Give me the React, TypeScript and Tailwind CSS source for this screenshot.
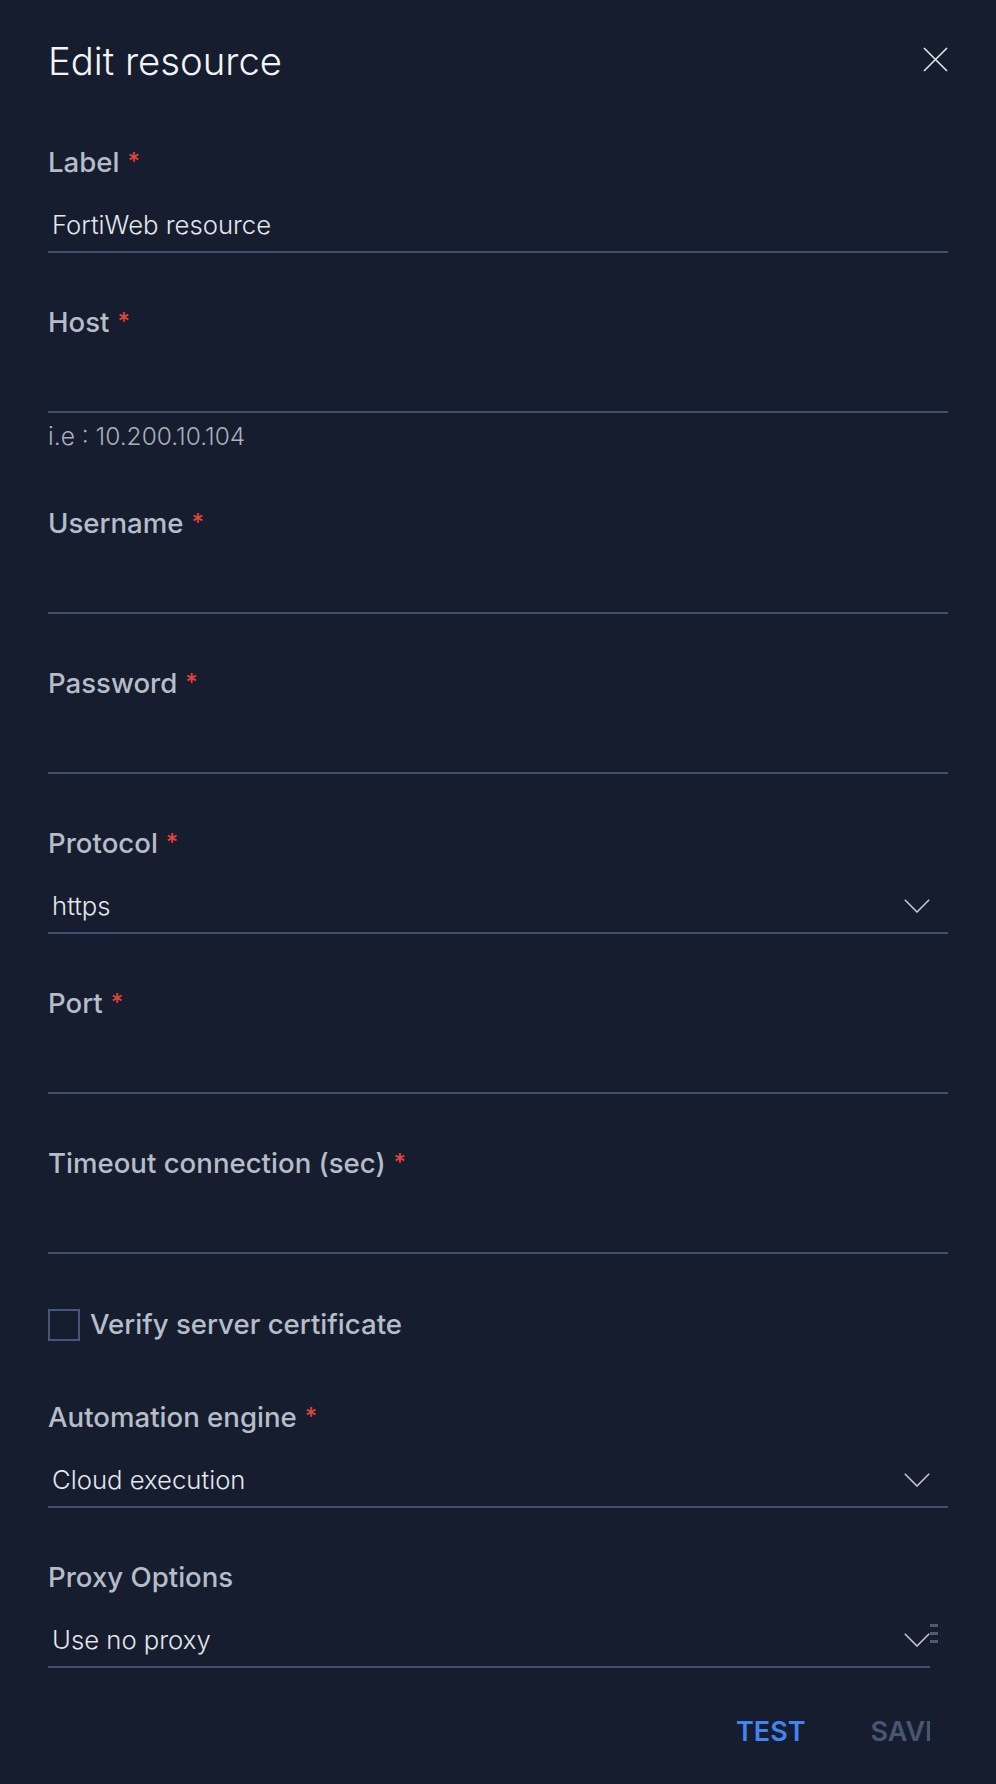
import React from "react";

function Chevron() {
  return (
    <svg width="26" height="14" viewBox="0 0 26 14" fill="none" className="shrink-0">
      <polyline points="0.8,0.8 13,13 25.2,0.8" stroke="#c9cdd3" strokeWidth="1.5" />
    </svg>
  );
}

function Field({
  label,
  required = true,
  value,
  select = false,
  className = "",
  chevronClass = "pr-[18px]",
  children,
}: {
  label: string;
  required?: boolean;
  value?: string;
  select?: boolean;
  className?: string;
  chevronClass?: string;
  children?: React.ReactNode;
}) {
  return (
    <div className={className}>
      <div className="h-[40px] flex items-center text-[27.6px] font-medium text-[#b6bdc8]">
        {label}
        {required && <span className="ml-[8px] text-[24px] text-[#e0443a] -mt-[3px]">*</span>}
      </div>
      <div className="relative h-[70px] border-b-2 border-[#3f5072] flex items-end pb-[8px]">
        <div className={`h-[36px] w-full flex items-center justify-between pl-[4px] ${select ? chevronClass : ""}`}>
          <span className="text-[25.7px] font-light text-[#e4e7eb] leading-[36px]">{value}</span>
          {select && <Chevron />}
        </div>
        {children}
      </div>
    </div>
  );
}

export default function App() {
  return (
    <div className="w-[996px] min-h-[1784px] bg-[#151d2f] px-[48px] pt-[39px] font-['Inter',sans-serif] antialiased">
      {/* Header */}
      <div className="h-[44px] flex items-center justify-between">
        <h1 className="text-[38.3px] font-light text-[#f3f4f6] leading-[44px]">Edit resource</h1>
        <svg width="25" height="25" viewBox="0 0 25 25" className="-mt-[4px]">
          <path d="M1 1 L24 24 M24 1 L1 24" stroke="#e5e7eb" strokeWidth="1.6" />
        </svg>
      </div>

      <Field className="mt-[60px]" label="Label" value="FortiWeb resource" />

      <Field className="mt-[50px]" label="Host" />
      <div className="h-[41px] pt-[9px]">
        <p className="text-[24.5px] font-light text-[#a9b0bb] leading-[28px]">i.e : 10.200.10.104</p>
      </div>

      <Field className="mt-[50px]" label="Username" />
      <Field className="mt-[50px]" label="Password" />
      <Field className="mt-[50px]" label="Protocol" value="https" select />
      <Field className="mt-[50px]" label="Port" />
      <Field className="mt-[50px]" label="Timeout connection (sec)" />

      {/* Checkbox */}
      <label className="mt-[55px] h-[32px] flex items-center gap-[10px]">
        <span className="w-[32px] h-[32px] border-2 border-[#46577a]" />
        <span className="text-[27.6px] font-medium text-[#b6bdc8]">Verify server certificate</span>
      </label>

      <Field className="mt-[57px]" label="Automation engine" value="Cloud execution" select />

      <Field
        className="mt-[50px] w-[882px]"
        label="Proxy Options"
        required={false}
        value="Use no proxy"
        select
        chevronClass="pr-0"
      >
        <div className="absolute left-[882px] top-[26px] flex flex-col gap-[5px]">
          <span className="block w-[8px] h-[3px] bg-[#4d5b75]" />
          <span className="block w-[8px] h-[3px] bg-[#4d5b75]" />
          <span className="block w-[8px] h-[3px] bg-[#4d5b75]" />
        </div>
      </Field>

      {/* Actions */}
      <div className="mt-[44px] w-[882px] h-[40px] overflow-hidden flex items-center pl-[688px] gap-[65px] whitespace-nowrap">
        <button className="text-[27px] font-semibold text-[#4285f0]">TEST</button>
        <button className="text-[27px] font-semibold text-[#48566f]">SAVE</button>
      </div>
    </div>
  );
}
